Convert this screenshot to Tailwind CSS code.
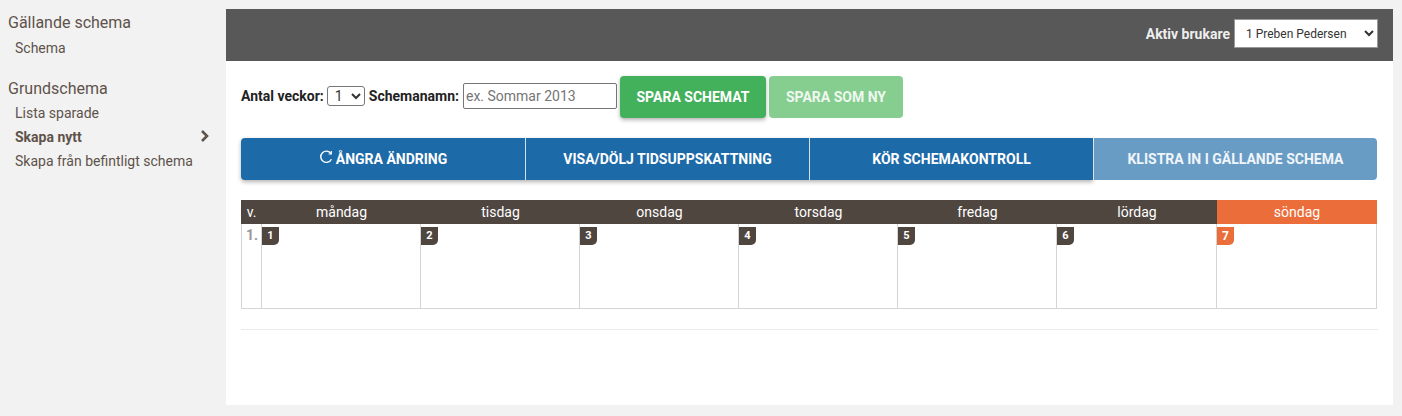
<!DOCTYPE html>
<html lang="sv">
  <head>
    <meta charset="UTF-8" />
    <title>Skapa nytt schema</title>
    <script src="https://cdn.jsdelivr.net/npm/@tailwindcss/browser@4"></script>
  </head>
  <body class="bg-[#f2f2f2] font-['Roboto',sans-serif] text-[#222] overflow-hidden">
    <div class="flex h-[416px] w-[1402px] pt-[9px]">
      <!-- Sidebar -->
      <aside class="w-[226px] shrink-0 text-[#5e524b]">
        <h3 class="pl-2 text-base h-[27px] leading-[28px]">Gällande schema</h3>
        <ul class="text-sm">
          <li class="pl-[15px] leading-[24px]">Schema</li>
        </ul>
        <h3 class="pl-2 mt-[15px] text-base h-[26px] leading-[28px]">Grundschema</h3>
        <ul class="text-sm">
          <li class="pl-[15px] leading-[24px]">Lista sparade</li>
          <li class="pl-[15px] pr-[16px] leading-[24px] font-bold flex items-center justify-between">
            Skapa nytt
            <svg class="w-[10px] h-[14px] -mt-[3px]" viewBox="0 0 10 14" fill="none" stroke="#5e524b" stroke-width="2.6"><path d="M2 2l5 5-5 5" /></svg>
          </li>
          <li class="pl-[15px] leading-[24px]">Skapa från befintligt schema</li>
        </ul>
      </aside>

      <!-- Main -->
      <main class="w-[1167px] h-[396px] bg-white">
        <div class="h-[52px] bg-[#585858] flex items-center justify-end pr-[15px] pb-[3px] gap-1">
          <span class="text-sm font-bold text-[#eee]">Aktiv brukare</span>
          <select class="w-[144px] h-[29px] bg-white border border-[#999] text-xs text-[#333] pl-[7px]">
            <option>1 Preben Pedersen</option>
          </select>
        </div>

        <div class="px-[15px]">
          <!-- Form -->
          <div class="flex items-center h-[42px] mt-[15px] text-sm">
            <div class="flex items-center -mt-[2px]">
              <label class="font-bold">Antal veckor:</label>
              <select class="ml-[3px] w-[38px] h-[20px] border border-[#767676] rounded-[3px] bg-white text-sm pl-[3px] text-[#333]">
                <option>1</option>
              </select>
              <label class="ml-1 font-bold">Schemanamn:</label>
              <input class="ml-1 w-[154px] h-[26px] border border-[#767676] rounded-[2px] px-[2px] text-sm placeholder:text-[#757575]" placeholder="ex. Sommar 2013" />
            </div>
            <button class="ml-[3px] w-[146px] h-[42px] rounded bg-[#43b05c] text-white text-sm font-bold shadow-[0_2px_4px_rgba(0,0,0,0.3)]">SPARA SCHEMAT</button>
            <button class="ml-[3px] w-[134px] h-[42px] rounded bg-[#86cd90] text-[#eef8ef] text-sm font-bold">SPARA SOM NY</button>
          </div>

          <!-- Actions -->
          <div class="flex w-[1136px] h-[42px] mt-[20px] text-white text-sm font-bold">
            <div class="flex w-[852px] rounded-l bg-[#1d6aa8] shadow-[0_2px_4px_rgba(0,0,0,0.3)]">
              <button class="w-[285px] flex items-center justify-center gap-[3px] border-r border-[#d5e2ee]">
                <svg class="w-[14px] h-[14px] -mt-[4px]" viewBox="0 0 14 14" fill="none" stroke="currentColor" stroke-width="1.4"><path d="M12 3.6A5.6 5.6 0 1 0 12.4 9.2" /><path d="M12.3 1v3H9.6" stroke-width="1.2" /></svg>
                ÅNGRA ÄNDRING
              </button>
              <button class="w-[284px] border-r border-[#d5e2ee]">VISA/DÖLJ TIDSUPPSKATTNING</button>
              <button class="w-[283px]">KÖR SCHEMAKONTROLL</button>
            </div>
            <button class="ml-px flex-1 rounded-r bg-[#699cc5] text-[#f0f5f9]">KLISTRA IN I GÄLLANDE SCHEMA</button>
          </div>

          <!-- Calendar -->
          <div class="mt-[20px] w-[1136px]">
            <div class="grid grid-cols-[21px_159px_159px_159px_159px_159px_160px_160px] h-6 items-center text-center text-sm text-white bg-[#4f4640]">
              <div>v.</div>
              <div>måndag</div>
              <div>tisdag</div>
              <div>onsdag</div>
              <div>torsdag</div>
              <div>fredag</div>
              <div>lördag</div>
              <div class="h-6 leading-6 bg-[#eb6d3a]">söndag</div>
            </div>
            <div class="grid grid-cols-[19px_159px_159px_159px_159px_159px_160px_160px] h-[85px] border-b border-[#d4d4d4] border-l border-r">
              <div class="text-sm font-bold text-[#999] pl-[4px] leading-[23px]">1.</div>
              <div class="border-l border-[#d4d4d4] pt-[3px]"><span class="flex w-[17px] h-[18px] items-center justify-center rounded-br-[5px] bg-[#4f4640] text-[11px] font-bold text-white">1</span></div>
              <div class="border-l border-[#d4d4d4] pt-[3px]"><span class="flex w-[17px] h-[18px] items-center justify-center rounded-br-[5px] bg-[#4f4640] text-[11px] font-bold text-white">2</span></div>
              <div class="border-l border-[#d4d4d4] pt-[3px]"><span class="flex w-[17px] h-[18px] items-center justify-center rounded-br-[5px] bg-[#4f4640] text-[11px] font-bold text-white">3</span></div>
              <div class="border-l border-[#d4d4d4] pt-[3px]"><span class="flex w-[17px] h-[18px] items-center justify-center rounded-br-[5px] bg-[#4f4640] text-[11px] font-bold text-white">4</span></div>
              <div class="border-l border-[#d4d4d4] pt-[3px]"><span class="flex w-[17px] h-[18px] items-center justify-center rounded-br-[5px] bg-[#4f4640] text-[11px] font-bold text-white">5</span></div>
              <div class="border-l border-[#d4d4d4] pt-[3px]"><span class="flex w-[17px] h-[18px] items-center justify-center rounded-br-[5px] bg-[#4f4640] text-[11px] font-bold text-white">6</span></div>
              <div class="border-l border-[#d4d4d4] pt-[3px]"><span class="flex w-[17px] h-[18px] items-center justify-center rounded-br-[5px] bg-[#eb6d3a] text-[12px] font-bold text-white">7</span></div>
            </div>
          </div>
          <hr class="mt-5 w-[1137px] border-[#eaeaea]" />
        </div>
      </main>
    </div>
  </body>
</html>
